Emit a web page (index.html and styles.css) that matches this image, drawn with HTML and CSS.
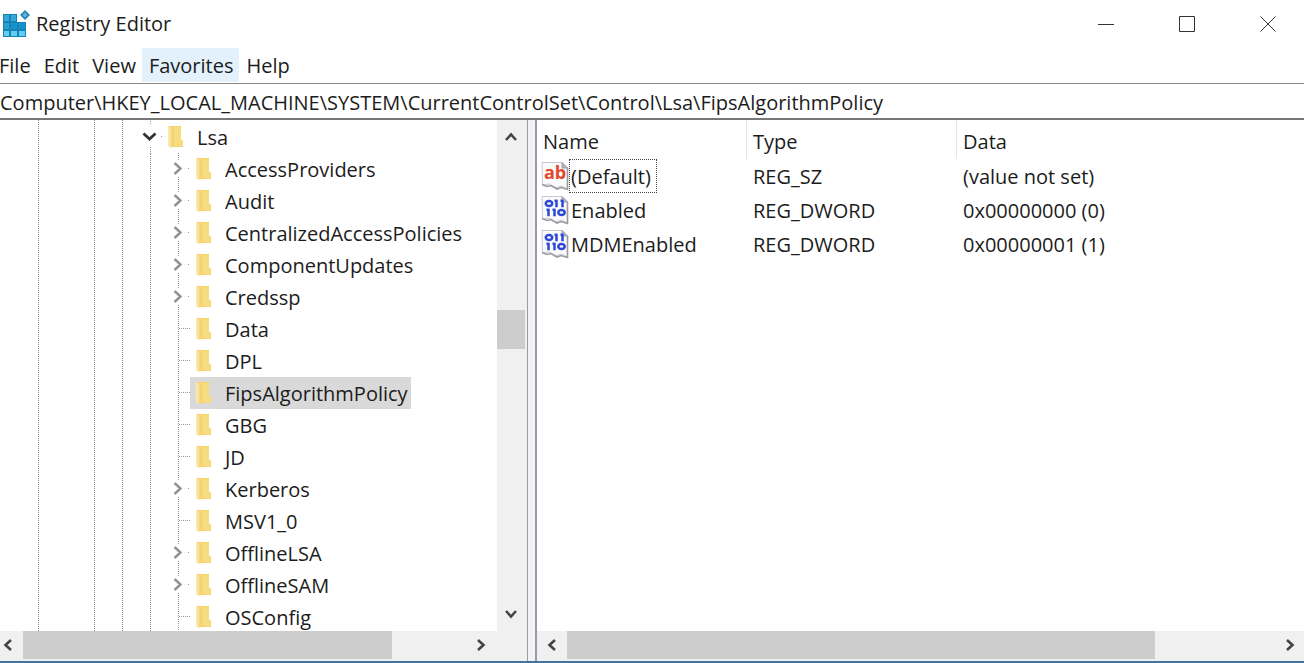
FILE: index.html
```
<!DOCTYPE html>
<html lang="en">
<head>
<meta charset="utf-8">
<title>Registry Editor</title>
<link rel="stylesheet" href="styles.css">
</head>
<body>
<svg class="defs" aria-hidden="true">
  <defs>
    <linearGradient id="fold" x1="0" x2="1" y1="0" y2="0"><stop offset="0" stop-color="#fdecb4"/><stop offset="1" stop-color="#f0cd68"/></linearGradient>
    <symbol id="folder" viewBox="0 0 18 26"><path d="M1 1h13v13l2 2v6H4z" fill="#f3d372"/><path d="M1 1l6 3v15l-3 4-3-2z" fill="url(#fold)"/><path d="M7 2h7v12l2 2v5H7z" fill="#f8dc80"/></symbol>
    <symbol id="leaf" viewBox="0 0 26 32"><path d="M14.500 0v32M15 15.500h11" stroke="#9a9a9a" stroke-dasharray="1 1"/></symbol>
    <symbol id="closed" viewBox="0 0 26 32"><path d="M14.500 0v8M14.500 24v8M24 15.500h2" stroke="#9a9a9a" stroke-dasharray="1 1"/><path d="M10.500 10l6 5.500-6 5.500" fill="none" stroke="#939393" stroke-width="2.400"/></symbol>
    <symbol id="open" viewBox="0 0 26 32"><path d="M14.500 0v4M14.500 26v6M25.500 15v1" stroke="#9a9a9a" stroke-dasharray="1 1"/><path d="M7.500 12.500l6 5.500 6-5.500" fill="none" stroke="#333" stroke-width="2.800"/></symbol>
    <symbol id="page" viewBox="0 0 28 30"><path d="M1 1.500h20l5.500 5V28l-6-3-6 2-6-4-7 1z" fill="#fafafa" stroke="#c9c9cd"/><path d="M21 1.500V7h5.500z" fill="#b4b7c0" stroke="#9da0a8"/><path d="M1 23.500l5 2 4-1 6 3.500 4-1.500 6.500 2V7" fill="none" stroke="#9b9ca3" stroke-width="1.600"/></symbol>
    <symbol id="binary" viewBox="0 0 28 30"><use href="#page"/><g fill="none" stroke="#2b48d6" stroke-width="2.500"><ellipse cx="8" cy="8.500" rx="3.200" ry="2.600"/><path d="M15.500 4.700v7.600M21.500 4.700v7.600M13.500 5.700h2M19.500 5.700h2M7.500 13.700v7.600M13.500 13.700v7.600M5.500 14.700h2M11.500 14.700h2"/><ellipse cx="20.500" cy="17.500" rx="3.200" ry="2.600"/></g></symbol>
    <symbol id="left" viewBox="0 0 12 14"><path d="M9 2L3.500 7 9 12" fill="none" stroke="#444" stroke-width="2.600"/></symbol>
    <symbol id="right" viewBox="0 0 12 14"><path d="M3 2l5.500 5L3 12" fill="none" stroke="#444" stroke-width="2.600"/></symbol>
    <symbol id="up" viewBox="0 0 14 12"><path d="M2 9l5-5.500L12 9" fill="none" stroke="#444" stroke-width="2.600"/></symbol>
    <symbol id="down" viewBox="0 0 14 12"><path d="M2 3l5 5.500L12 3" fill="none" stroke="#444" stroke-width="2.600"/></symbol>
  </defs>
</svg>
<div class="window">
  <header class="titlebar">
    <svg class="app-icon" viewBox="0 0 30 30" aria-hidden="true">
      <path d="M3 5h14v8h9v15H3z" fill="#1583b5"/>
      <path d="M4 6h5v6H4zM11 6h5v6h-5z" fill="#35a9d8"/><path d="M4 14h5v6H4z" fill="#2c9fd0"/><path d="M11 14h6v6h-6zM19 14h6v6h-6z" fill="#1492ca"/><path d="M4 22h5v5H4zM11 22h6v5h-6zM19 22h6v5h-6z" fill="#62cdf2"/>
      <path d="M25 1l5 5-5 5-5-5z" fill="#2589b8"/><path d="M25 3.500l2.500 2.500-2.500 2.500-2.500-2.500z" fill="#64b6da"/>
    </svg>
    <h1 class="title">Registry Editor</h1>
    <div class="controls">
      <button class="control" aria-label="Minimize"><svg viewBox="0 0 16 16"><path d="M0 8.500h16"/></svg></button>
      <button class="control" aria-label="Maximize"><svg viewBox="0 0 16 16"><path d="M.5.500h15v15H.5z"/></svg></button>
      <button class="control" aria-label="Close"><svg viewBox="0 0 16 16"><path d="M.5.500l15 15M15.500.500l-15 15"/></svg></button>
    </div>
  </header>
  <nav class="menubar">
    <button class="menu">File</button><button class="menu">Edit</button><button class="menu">View</button><button class="menu active">Favorites</button><button class="menu">Help</button>
  </nav>
  <input class="address" aria-label="Key path" value="Computer\HKEY_LOCAL_MACHINE\SYSTEM\CurrentControlSet\Control\Lsa\FipsAlgorithmPolicy">
  <main class="panes">
    <section class="tree-pane">
      <div class="tree-body">
        <div class="tree">
          <span class="guide first"></span><span class="guide wide"></span><span class="guide half"></span>
          <ul class="keys">
            <li><div class="row"><svg class="lines"><use href="#open"/></svg><button class="key"><svg class="folder"><use href="#folder"/></svg>Lsa</button></div>
              <ul class="children">
                <li class="row"><svg class="lines"><use href="#closed"/></svg><button class="key"><svg class="folder"><use href="#folder"/></svg>AccessProviders</button></li>
                <li class="row"><svg class="lines"><use href="#closed"/></svg><button class="key"><svg class="folder"><use href="#folder"/></svg>Audit</button></li>
                <li class="row"><svg class="lines"><use href="#closed"/></svg><button class="key"><svg class="folder"><use href="#folder"/></svg>CentralizedAccessPolicies</button></li>
                <li class="row"><svg class="lines"><use href="#closed"/></svg><button class="key"><svg class="folder"><use href="#folder"/></svg>ComponentUpdates</button></li>
                <li class="row"><svg class="lines"><use href="#closed"/></svg><button class="key"><svg class="folder"><use href="#folder"/></svg>Credssp</button></li>
                <li class="row"><svg class="lines"><use href="#leaf"/></svg><button class="key"><svg class="folder"><use href="#folder"/></svg>Data</button></li>
                <li class="row"><svg class="lines"><use href="#leaf"/></svg><button class="key"><svg class="folder"><use href="#folder"/></svg>DPL</button></li>
                <li class="row"><svg class="lines"><use href="#leaf"/></svg><button class="key selected"><svg class="folder"><use href="#folder"/></svg>FipsAlgorithmPolicy</button></li>
                <li class="row"><svg class="lines"><use href="#leaf"/></svg><button class="key"><svg class="folder"><use href="#folder"/></svg>GBG</button></li>
                <li class="row"><svg class="lines"><use href="#leaf"/></svg><button class="key"><svg class="folder"><use href="#folder"/></svg>JD</button></li>
                <li class="row"><svg class="lines"><use href="#closed"/></svg><button class="key"><svg class="folder"><use href="#folder"/></svg>Kerberos</button></li>
                <li class="row"><svg class="lines"><use href="#leaf"/></svg><button class="key"><svg class="folder"><use href="#folder"/></svg>MSV1_0</button></li>
                <li class="row"><svg class="lines"><use href="#closed"/></svg><button class="key"><svg class="folder"><use href="#folder"/></svg>OfflineLSA</button></li>
                <li class="row"><svg class="lines"><use href="#closed"/></svg><button class="key"><svg class="folder"><use href="#folder"/></svg>OfflineSAM</button></li>
                <li class="row"><svg class="lines"><use href="#leaf"/></svg><button class="key"><svg class="folder"><use href="#folder"/></svg>OSConfig</button></li>
              </ul>
            </li>
          </ul>
        </div>
        <div class="vscroll">
          <button class="arrow tall" aria-label="Scroll up"><svg class="v"><use href="#up"/></svg></button>
          <span class="before"></span><span class="thumb vthumb"></span><span class="after"></span>
          <button class="arrow tall" aria-label="Scroll down"><svg class="v"><use href="#down"/></svg></button>
        </div>
      </div>
      <div class="hscroll corner">
        <button class="arrow start" aria-label="Scroll left"><svg class="h"><use href="#left"/></svg></button>
        <span class="track"><span class="thumb tree-thumb"></span></span>
        <button class="arrow" aria-label="Scroll right"><svg class="h"><use href="#right"/></svg></button>
      </div>
    </section>
    <section class="value-pane">
      <div class="values-body">
        <table class="values">
          <thead><tr><th class="fixed">Name</th><th class="fixed">Type</th><th>Data</th></tr></thead>
          <tbody>
            <tr><td><span class="name"><svg class="value-icon" viewBox="0 0 28 30"><use href="#page"/><text class="ab" x="3" y="18">ab</text></svg><span class="label focused">(Default)</span></span></td><td>REG_SZ</td><td>(value not set)</td></tr>
            <tr><td><span class="name"><svg class="value-icon"><use href="#binary"/></svg><span class="label">Enabled</span></span></td><td>REG_DWORD</td><td>0x00000000 (0)</td></tr>
            <tr><td><span class="name"><svg class="value-icon"><use href="#binary"/></svg><span class="label">MDMEnabled</span></span></td><td>REG_DWORD</td><td>0x00000001 (1)</td></tr>
          </tbody>
        </table>
      </div>
      <div class="hscroll">
        <button class="arrow value-start" aria-label="Scroll left"><svg class="h"><use href="#left"/></svg></button>
        <span class="track"><span class="thumb value-thumb"></span></span>
        <button class="arrow" aria-label="Scroll right"><svg class="h"><use href="#right"/></svg></button>
      </div>
    </section>
  </main>
</div>
</body>
</html>
```
FILE: styles.css
```
* { box-sizing: border-box; }
body { margin: 0; background: #fff; color: #1c1c1c; font: 20px/32px "Open Sans", "Noto Sans", sans-serif; }
button, input { font: inherit; color: inherit; border: 0; padding: 0; margin: 0; background: none; }
ul { list-style: none; margin: 0; padding: 0; }
svg { display: block; flex: none; }
.defs { position: absolute; width: 0; height: 0; }
.window { display: flex; flex-direction: column; height: 100vh; overflow: hidden; border-bottom: 2px solid #3f74a3; }

.titlebar { display: flex; align-items: center; height: 48px; flex: none; }
.app-icon { width: 30px; height: 30px; }
.title { margin: 0 auto 0 6px; font-size: 20px; font-weight: 400; }
.controls { display: flex; margin-right: -4px; }
.control { display: flex; align-items: center; justify-content: center; width: 81px; height: 48px; }
.control svg { width: 16px; height: 16px; fill: none; stroke: #333; }

.menubar { display: flex; flex: none; height: 35px; margin-left: -8px; }
.menu { padding: 2px 6px 0 7px; height: 34px; white-space: nowrap; }
.menu.active { background: #e2f1fb; }

.address { flex: none; width: 100%; height: 37px; padding-top: 2px; border-top: 1px solid #888; border-bottom: 2px solid #777; outline: 0; }

.panes { display: flex; flex: 1; min-height: 0; background: #f2f2f4; gap: 7px; }
.tree-pane { display: flex; flex-direction: column; flex: none; width: 528px; border-right: 1px solid #9a9aa2; background: #fff; }
.tree-body { display: flex; flex: 1; min-height: 0; }
.tree { display: flex; flex: 1; min-width: 0; overflow: hidden; }
.guide { flex: none; border-right: 1px dotted #8a8a8a; }
.guide.first { width: 39px; }
.guide.wide { width: 56px; }
.guide.half { width: 28px; }
.keys { padding: 1px 0 0 13px; }
.row { display: flex; height: 32px; }
.children { margin-left: 14px; padding-left: 13px; border-left: 1px dotted #8a8a8a; }
.lines { width: 26px; height: 32px; }
.key { display: flex; align-items: center; height: 32px; padding: 2px 3px 0 5px; gap: 12px; white-space: nowrap; }
.folder { width: 18px; height: 26px; }
.key.selected { background: #d9d9d9; }

.vscroll { display: flex; flex-direction: column; width: 30px; padding-right: 2px; background: #f0f0f0; }
.arrow { display: flex; align-items: center; justify-content: center; flex: none; width: 28px; height: 28px; }
.arrow.tall { height: 34px; }
.arrow.start { width: 23px; padding-right: 8px; }
.arrow.value-start { width: 30px; }
.h { width: 12px; height: 14px; }
.v { width: 14px; height: 12px; }
.before { flex: 156; }
.after { flex: 248; }
.thumb { background: #cdcdcd; }
.vthumb { height: 39px; }
.hscroll { display: flex; flex: none; height: 30px; padding-bottom: 2px; background: #f0f0f0; }
.hscroll.corner { padding-right: 32px; }
.track { display: flex; flex: 1; }
.tree-thumb { width: 83%; }
.value-thumb { width: 83%; }

.value-pane { display: flex; flex-direction: column; flex: 1; min-width: 0; border-left: 2px solid #9a9aa2; background: #fff; }
.values-body { flex: 1; min-height: 0; overflow: hidden; }
.values { width: 100%; table-layout: fixed; border-collapse: separate; border-spacing: 0; }
.values th { height: 39px; padding: 5px 6px 0; line-height: 30px; text-align: left; font-weight: 400; border-right: 1px solid #e5e5e5; }
.values th:last-child { border: 0; }
.fixed { width: 210px; }
.values td { height: 34px; padding: 2px 6px 0; }
.values td:first-child { padding: 0 0 0 4px; }
.name { display: flex; align-items: center; height: 34px; }
.value-icon { width: 28px; height: 30px; }
.label { padding: 2px 5px 0 1px; border: 1px solid transparent; line-height: 30px; }
.label.focused { border: 1px dotted #444; }
.ab { font: 700 18px "Open Sans", sans-serif; fill: #e1482c; }
```
